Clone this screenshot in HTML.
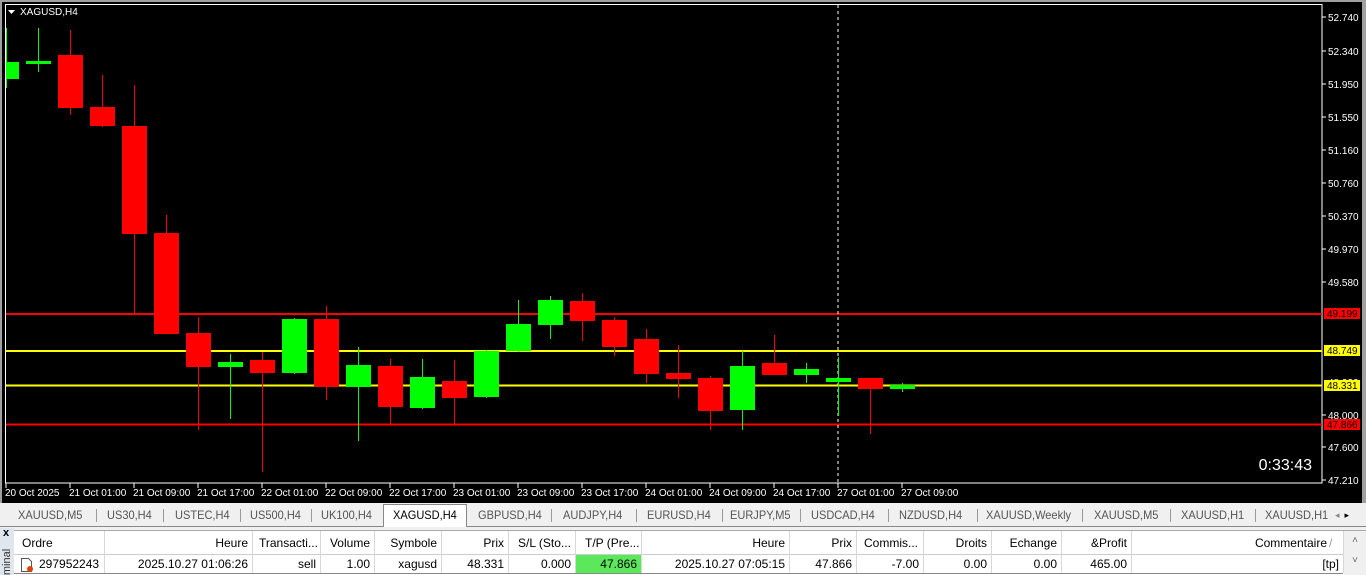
<!DOCTYPE html>
<html><head><meta charset="utf-8"><style>
*{margin:0;padding:0;box-sizing:border-box}
body{width:1366px;height:575px;overflow:hidden;background:#f0f0f0;font-family:"Liberation Sans",sans-serif;position:relative}
.abs{position:absolute}
.tab{position:absolute;top:505px;height:21px;font-size:12px;color:#555;line-height:21px;text-align:center;transform:scaleX(.92);transform-origin:left}
.sep{position:absolute;top:509px;width:1px;height:13px;background:#999}
.cell{position:absolute;height:22px;line-height:22px;font-size:12px;color:#000;white-space:nowrap;overflow:hidden;padding:0 4px}
.vl{position:absolute;width:1px;background:#d8d8d8}
</style></head><body>
<svg class="abs" style="left:0;top:0" width="1366" height="503" xmlns="http://www.w3.org/2000/svg" font-family="Liberation Sans, sans-serif">
<rect x="0" y="0" width="1366" height="503" fill="#000"/>
<rect x="0" y="0" width="1366" height="2" fill="#a0a0a0"/>
<rect x="0" y="0" width="2" height="503" fill="#a0a0a0"/>
<rect x="1362" y="0" width="4" height="503" fill="#a0a0a0"/>
<rect x="5.5" y="4.5" width="1316.5" height="478.5" fill="none" stroke="#fff" stroke-width="1"/>
<g fill="#fff" font-size="10">
<path d="M8 10h7l-3.5 4z"/>
<text x="20" y="15">XAGUSD,H4</text>
</g>
<!-- levels -->
<rect x="6" y="313" width="1316" height="2" fill="#f00"/>
<rect x="6" y="350" width="1316" height="2" fill="#ff0"/>
<rect x="6" y="384.5" width="1316" height="2" fill="#ff0"/>
<rect x="6" y="423.5" width="1316" height="2" fill="#f00"/>
<line x1="838" y1="5" x2="838" y2="483" stroke="#fff" stroke-dasharray="3,3"/>
<svg x="6" y="5" width="1316" height="478" overflow="hidden"><g transform="translate(-6,-5)">
<g id="c"></g>
</g></svg>
<!-- axis -->
<g fill="#fff" font-size="10">
<g stroke="#fff">
<line x1="1322" y1="17" x2="1326" y2="17"/><line x1="1322" y1="51" x2="1326" y2="51"/><line x1="1322" y1="84" x2="1326" y2="84"/><line x1="1322" y1="117" x2="1326" y2="117"/><line x1="1322" y1="150" x2="1326" y2="150"/><line x1="1322" y1="183" x2="1326" y2="183"/><line x1="1322" y1="216" x2="1326" y2="216"/><line x1="1322" y1="249" x2="1326" y2="249"/><line x1="1322" y1="282" x2="1326" y2="282"/><line x1="1322" y1="415" x2="1326" y2="415"/><line x1="1322" y1="447" x2="1326" y2="447"/><line x1="1322" y1="480" x2="1326" y2="480"/>
</g>
<text x="1328" y="21">52.740</text><text x="1328" y="55">52.340</text><text x="1328" y="88">51.950</text><text x="1328" y="121">51.550</text><text x="1328" y="154">51.160</text><text x="1328" y="187">50.760</text><text x="1328" y="220">50.370</text><text x="1328" y="253">49.970</text><text x="1328" y="286">49.580</text><text x="1328" y="419">48.000</text><text x="1328" y="451">47.600</text><text x="1328" y="484">47.210</text>
<text x="1328" y="386">48.330</text>
</g>
<rect x="1324" y="308" width="36" height="11" fill="#f00"/><text x="1327" y="317" font-size="10" fill="#000">49.199</text>
<rect x="1324" y="345" width="36" height="11" fill="#ff0"/><text x="1327" y="354" font-size="10" fill="#000">48.749</text>
<rect x="1324" y="380" width="36" height="11" fill="#ff0"/><text x="1327" y="389" font-size="10" fill="#000">48.331</text>
<rect x="1324" y="419" width="36" height="11" fill="#f00"/><text x="1327" y="428" font-size="10" fill="#000">47.866</text>
<text x="1312" y="470" font-size="16" fill="#fff" text-anchor="end">0:33:43</text>
<g fill="#fff" font-size="10" stroke="none">
<text x="5" y="496">20 Oct 2025</text><text x="69" y="496">21 Oct 01:00</text><text x="133" y="496">21 Oct 09:00</text><text x="197" y="496">21 Oct 17:00</text><text x="261" y="496">22 Oct 01:00</text><text x="325" y="496">22 Oct 09:00</text><text x="389" y="496">22 Oct 17:00</text><text x="453" y="496">23 Oct 01:00</text><text x="517" y="496">23 Oct 09:00</text><text x="581" y="496">23 Oct 17:00</text><text x="645" y="496">24 Oct 01:00</text><text x="709" y="496">24 Oct 09:00</text><text x="773" y="496">24 Oct 17:00</text><text x="837" y="496">27 Oct 01:00</text><text x="901" y="496">27 Oct 09:00</text>
</g>
<g stroke="#fff"><line x1="6" y1="483" x2="6" y2="488"/><line x1="70" y1="483" x2="70" y2="488"/><line x1="134" y1="483" x2="134" y2="488"/><line x1="198" y1="483" x2="198" y2="488"/><line x1="262" y1="483" x2="262" y2="488"/><line x1="326" y1="483" x2="326" y2="488"/><line x1="390" y1="483" x2="390" y2="488"/><line x1="454" y1="483" x2="454" y2="488"/><line x1="518" y1="483" x2="518" y2="488"/><line x1="582" y1="483" x2="582" y2="488"/><line x1="646" y1="483" x2="646" y2="488"/><line x1="710" y1="483" x2="710" y2="488"/><line x1="774" y1="483" x2="774" y2="488"/><line x1="838" y1="483" x2="838" y2="488"/><line x1="902" y1="483" x2="902" y2="488"/></g>
</svg>
<div class="abs" style="left:0;top:503px;width:1366px;height:24px;background:#f0f0f0;border-bottom:1px solid #888"></div>
<div class="abs" style="left:383px;top:504px;width:84px;height:23px;background:#fff;border:1px solid #888;border-bottom:none"></div>
<div class="tab" style="left:18px">XAUUSD,M5</div><div class="sep" style="left:96px"></div>
<div class="tab" style="left:107px">US30,H4</div><div class="sep" style="left:163px"></div>
<div class="tab" style="left:175px">USTEC,H4</div><div class="sep" style="left:240px"></div>
<div class="tab" style="left:250px">US500,H4</div><div class="sep" style="left:311px"></div>
<div class="tab" style="left:321px">UK100,H4</div>
<div class="tab" style="left:393px;color:#000">XAGUSD,H4</div>
<div class="tab" style="left:478px">GBPUSD,H4</div><div class="sep" style="left:551px"></div>
<div class="tab" style="left:563px">AUDJPY,H4</div><div class="sep" style="left:636px"></div>
<div class="tab" style="left:647px">EURUSD,H4</div><div class="sep" style="left:722px"></div>
<div class="tab" style="left:730px">EURJPY,M5</div><div class="sep" style="left:800px"></div>
<div class="tab" style="left:811px">USDCAD,H4</div><div class="sep" style="left:888px"></div>
<div class="tab" style="left:899px">NZDUSD,H4</div><div class="sep" style="left:977px"></div>
<div class="tab" style="left:986px">XAUUSD,Weekly</div><div class="sep" style="left:1082px"></div>
<div class="tab" style="left:1094px">XAUUSD,M5</div><div class="sep" style="left:1170px"></div>
<div class="tab" style="left:1181px">XAUUSD,H1</div><div class="sep" style="left:1255px"></div>
<div class="tab" style="left:1265px">XAUUSD,H1</div>
<div class="abs" style="left:1330px;top:505px;width:36px;height:21px;background:#f0f0f0;font-size:9px;line-height:21px;color:#888">&nbsp;&nbsp;◂ <span style="color:#000">&nbsp;▸</span></div>
<!-- terminal -->
<div class="abs" style="left:0;top:528px;width:14px;height:47px;background:#dfe6ee"></div>
<div class="abs" style="left:3px;top:527px;font-size:11px;font-weight:bold">x</div>
<div class="abs" style="left:-6px;top:556px;font-size:11px;color:#333;transform:rotate(-90deg)">minal</div>
<div class="abs" style="left:14px;top:530px;width:1352px;height:45px;background:#fff;border-top:1px solid #aaa"></div>
<div class="abs" style="left:14px;top:554px;width:1329px;height:1px;background:#ccc"></div>
<div class="abs" style="left:14px;top:573px;width:1329px;height:1px;background:#888"></div>
<div class="vl" style="left:104px;top:531px;height:42px"></div><div class="vl" style="left:252px;top:531px;height:42px"></div><div class="vl" style="left:320px;top:531px;height:42px"></div><div class="vl" style="left:374px;top:531px;height:42px"></div><div class="vl" style="left:441px;top:531px;height:42px"></div><div class="vl" style="left:508px;top:531px;height:42px"></div><div class="vl" style="left:575px;top:531px;height:42px"></div><div class="vl" style="left:641px;top:531px;height:42px"></div><div class="vl" style="left:789px;top:531px;height:42px"></div><div class="vl" style="left:856px;top:531px;height:42px"></div><div class="vl" style="left:923px;top:531px;height:42px"></div><div class="vl" style="left:991px;top:531px;height:42px"></div><div class="vl" style="left:1061px;top:531px;height:42px"></div><div class="vl" style="left:1131px;top:531px;height:42px"></div><div class="vl" style="left:1343px;top:531px;height:42px"></div>
<div class="abs" style="left:576px;top:555px;width:65px;height:18px;background:#5be85b"></div>
<div class="cell" style="left:18px;top:532px">Ordre</div>
<div class="cell" style="left:104px;top:532px;width:148px;text-align:right">Heure</div>
<div class="cell" style="left:255px;top:532px">Transacti...</div>
<div class="cell" style="left:320px;top:532px;width:54px;text-align:right">Volume</div>
<div class="cell" style="left:374px;top:532px;width:67px;text-align:right">Symbole</div>
<div class="cell" style="left:441px;top:532px;width:67px;text-align:right">Prix</div>
<div class="cell" style="left:514px;top:532px">S/L (Sto...</div>
<div class="cell" style="left:581px;top:532px">T/P (Pre...</div>
<div class="cell" style="left:641px;top:532px;width:148px;text-align:right">Heure</div>
<div class="cell" style="left:789px;top:532px;width:67px;text-align:right">Prix</div>
<div class="cell" style="left:860px;top:532px">Commis...</div>
<div class="cell" style="left:923px;top:532px;width:68px;text-align:right">Droits</div>
<div class="cell" style="left:991px;top:532px;width:70px;text-align:right">Echange</div>
<div class="cell" style="left:1061px;top:532px;width:70px;text-align:right">&amp;Profit</div>
<div class="cell" style="left:1131px;top:532px;width:200px;text-align:right">Commentaire</div>
<div class="cell" style="left:1325px;top:532px;color:#999">/</div>
<svg class="abs" style="left:20px;top:557px" width="16" height="16"><path d="M1.5 1.5h7l3 3v10h-10z" fill="#fff" stroke="#555"/><circle cx="10" cy="12" r="3" fill="#e04000"/></svg>
<div class="cell" style="left:35px;top:553px">297952243</div>
<div class="cell" style="left:104px;top:553px;width:148px;text-align:right">2025.10.27 01:06:26</div>
<div class="cell" style="left:252px;top:553px;width:68px;text-align:right">sell</div>
<div class="cell" style="left:320px;top:553px;width:54px;text-align:right">1.00</div>
<div class="cell" style="left:374px;top:553px;width:67px;text-align:right">xagusd</div>
<div class="cell" style="left:441px;top:553px;width:67px;text-align:right">48.331</div>
<div class="cell" style="left:508px;top:553px;width:67px;text-align:right">0.000</div>
<div class="cell" style="left:575px;top:553px;width:66px;text-align:right">47.866</div>
<div class="cell" style="left:641px;top:553px;width:148px;text-align:right">2025.10.27 07:05:15</div>
<div class="cell" style="left:789px;top:553px;width:67px;text-align:right">47.866</div>
<div class="cell" style="left:856px;top:553px;width:67px;text-align:right">-7.00</div>
<div class="cell" style="left:923px;top:553px;width:68px;text-align:right">0.00</div>
<div class="cell" style="left:991px;top:553px;width:70px;text-align:right">0.00</div>
<div class="cell" style="left:1061px;top:553px;width:70px;text-align:right">465.00</div>
<div class="cell" style="left:1131px;top:553px;width:212px;text-align:right">[tp]</div>
<div class="abs" style="left:1344px;top:531px;width:22px;height:44px;background:#f0f0f0;font-size:10px;color:#666;text-align:center;line-height:20px">˄<br>˅</div>
<script>
var d=[[1,62,79,28,88],[1,61,63,28,72],[0,55,108,30,115],[0,107,126,75,127],[0,126,234,85,313],[0,233,334,215,334],[0,333,367,317,430],[1,362,367,354,419],[0,360,373,352,472],[1,319,373,318,374],[0,319,387,306,400],[1,365,387,347,441],[0,366,407,359,425],[1,377,408,359,409],[0,381,398,360,425],[1,351,397,350,398],[1,324,351,300,352],[1,300,325,296,339],[0,301,321,293,341],[0,320,347,317,356],[0,339,374,329,383],[0,373,379,345,398],[0,378,411,376,430],[1,366,410,351,430],[0,363,375,335,375],[1,369,375,363,383],[1,378,382,357,416],[0,378,389,378,434],[1,385,389,383,392]];
var s='';d.forEach(function(c,i){var x=6.5+32*i,col=c[0]?'#00ff00':'#ff0000';s+='<rect x="'+(x-0.5)+'" y="'+c[3]+'" width="1" height="'+(c[4]-c[3])+'" fill="'+col+'"/><rect x="'+(x-12.5)+'" y="'+c[1]+'" width="25" height="'+Math.max(c[2]-c[1],3)+'" fill="'+col+'"/>';});
document.getElementById('c').innerHTML=s;
</script>
</body></html>
